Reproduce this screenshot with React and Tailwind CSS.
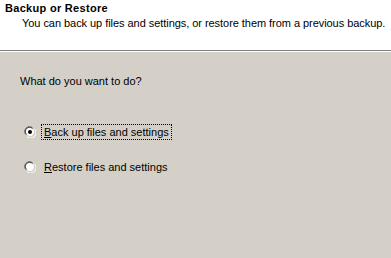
import React from "react";

function Radio({ checked }) {
  return (
    <svg width="12" height="12" viewBox="0 0 12 12" className="shrink-0">
      <path d="M1.5 8.5 A5 5 0 0 1 8.5 1.5" fill="none" stroke="#808080" strokeWidth="1" />
      <path d="M3 10.5 A5 5 0 0 0 10.5 3" fill="none" stroke="#ffffff" strokeWidth="1" />
      <circle cx="6" cy="6" r="4" fill="#ffffff" />
      <path d="M2.5 8.5 A4 4 0 0 1 8.5 2.5" fill="none" stroke="#404040" strokeWidth="1" />
      <path d="M3.5 9.5 A4 4 0 0 0 9.5 3.5" fill="none" stroke="#d4d0c8" strokeWidth="1" />
      {checked && <circle cx="6" cy="6" r="2" fill="#000000" />}
    </svg>
  );
}

export default function App() {
  return (
    <div
      className="w-[391px] h-[258px] bg-[#d4d0c8] text-[11px] text-black overflow-hidden"
      style={{ fontFamily: "Tahoma, 'Liberation Sans', Arial, sans-serif" }}
    >
      <div className="h-[50px] bg-white pl-[5px] pt-[2px]">
        <div className="font-bold leading-[13px] tracking-[0.3px]">Backup or Restore</div>
        <div className="pl-[17px] leading-[13px] mt-[2px] tracking-[-0.05px]">
          You can back up files and settings, or restore them from a previous backup.
        </div>
      </div>
      <div className="h-px bg-[#808080]" />
      <div className="h-px bg-white" />
      <div className="pl-[20px] pt-[23px] leading-[13px]">What do you want to do?</div>
      <div className="pl-[24px] pt-[36px] flex flex-col gap-[19px]">
        <div className="flex items-center h-[16px]">
          <Radio checked />
          <span className="ml-[5px] px-[2px] leading-[14px] border border-dotted border-black">
            <u>B</u>ack up files and settings
          </span>
        </div>
        <div className="flex items-center h-[16px]">
          <Radio />
          <span className="ml-[5px] px-[2px] leading-[14px] border border-transparent">
            <u>R</u>estore files and settings
          </span>
        </div>
      </div>
    </div>
  );
}
